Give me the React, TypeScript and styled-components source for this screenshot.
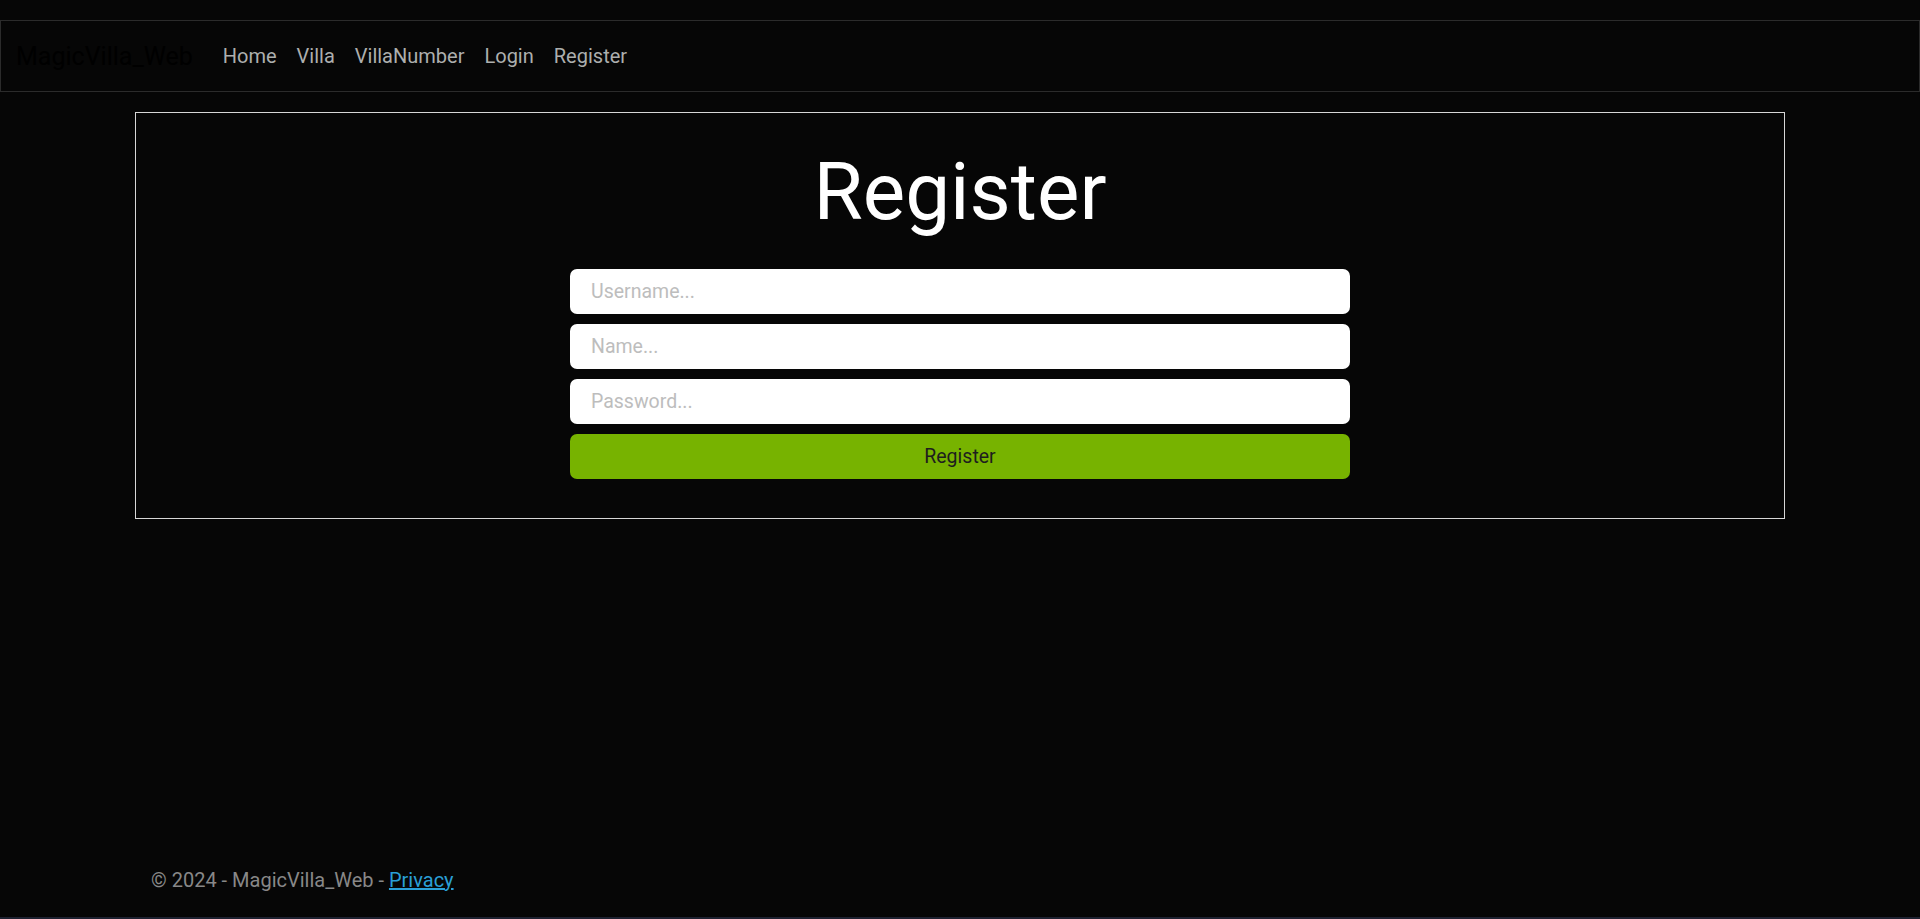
import React from "react";
import styled, { createGlobalStyle } from "styled-components";

const GlobalStyle = createGlobalStyle`
  html, body {
    margin: 0;
    padding: 0;
    background: #060606;
    font-family: Roboto, "Liberation Sans", Arial, sans-serif;
    color: #adafae;
  }
  * { box-sizing: border-box; }
`;

const Page = styled.div`
  min-height: 919px;
  height: 919px;
  display: flex;
  flex-direction: column;
  padding-top: 20px;
  border-bottom: 2px solid #1d2130;
`;

const NavBar = styled.nav`
  height: 72px;
  border: 1px solid #2b2b2b;
  display: flex;
  align-items: center;
  padding: 0 15px;
  background: #060606;
`;

const Brand = styled.a`
  font-size: 25px;
  color: #000;
  text-decoration: none;
  margin-right: 20px;
  line-height: 1;
`;

const NavList = styled.ul`
  display: flex;
  list-style: none;
  margin: 0;
  padding: 0;
`;

const NavLink = styled.a`
  display: block;
  padding: 0 10px;
  font-size: 20px;
  color: #adafae;
  text-decoration: none;
`;

const Main = styled.main`
  width: 1650px;
  margin: 20px auto 0;
`;

const Card = styled.section`
  border: 1px solid #d6d6d6;
  padding: 31px 0 39px;
  display: flex;
  flex-direction: column;
  align-items: center;
`;

const Title = styled.h1`
  margin: 0 0 29px;
  font-size: 80px;
  font-weight: 400;
  line-height: 96px;
  color: #ffffff;
`;

const Form = styled.form`
  width: 780px;
  display: flex;
  flex-direction: column;
  gap: 10px;
`;

const Input = styled.input`
  height: 45px;
  width: 100%;
  border: none;
  border-radius: 7px;
  background: #ffffff;
  padding: 0 20px 0 21px;
  font-family: inherit;
  font-size: 19.5px;
  color: #222;
  outline: none;
  &::placeholder {
    color: #bdbdbd;
  }
`;

const SubmitButton = styled.button`
  height: 45px;
  width: 100%;
  border: none;
  border-radius: 7px;
  background: #77b300;
  font-family: inherit;
  font-size: 19.5px;
  color: #1e1e1e;
  cursor: pointer;
`;

const Footer = styled.footer`
  margin-top: auto;
  height: 72px;
  display: flex;
  align-items: center;
`;

const FooterInner = styled.div`
  width: 1650px;
  margin: 0 auto;
  padding: 0 16px 2px;
  font-size: 20px;
  color: #888888;
`;

const FooterLink = styled.a`
  color: #2a9fd6;
  text-decoration: underline;
`;

const links = ["Home", "Villa", "VillaNumber", "Login", "Register"];

export default function App() {
  return (
    <>
      <GlobalStyle />
      <Page>
        <NavBar>
          <Brand href="#">MagicVilla_Web</Brand>
          <NavList>
            {links.map((l) => (
              <li key={l}>
                <NavLink href="#">{l}</NavLink>
              </li>
            ))}
          </NavList>
        </NavBar>
        <Main>
          <Card>
            <Title>Register</Title>
            <Form onSubmit={(e) => e.preventDefault()}>
              <Input type="text" placeholder="Username..." />
              <Input type="text" placeholder="Name..." />
              <Input type="password" placeholder="Password..." />
              <SubmitButton type="submit">Register</SubmitButton>
            </Form>
          </Card>
        </Main>
        <Footer>
          <FooterInner>
            © 2024 - MagicVilla_Web - <FooterLink href="#">Privacy</FooterLink>
          </FooterInner>
        </Footer>
      </Page>
    </>
  );
}
